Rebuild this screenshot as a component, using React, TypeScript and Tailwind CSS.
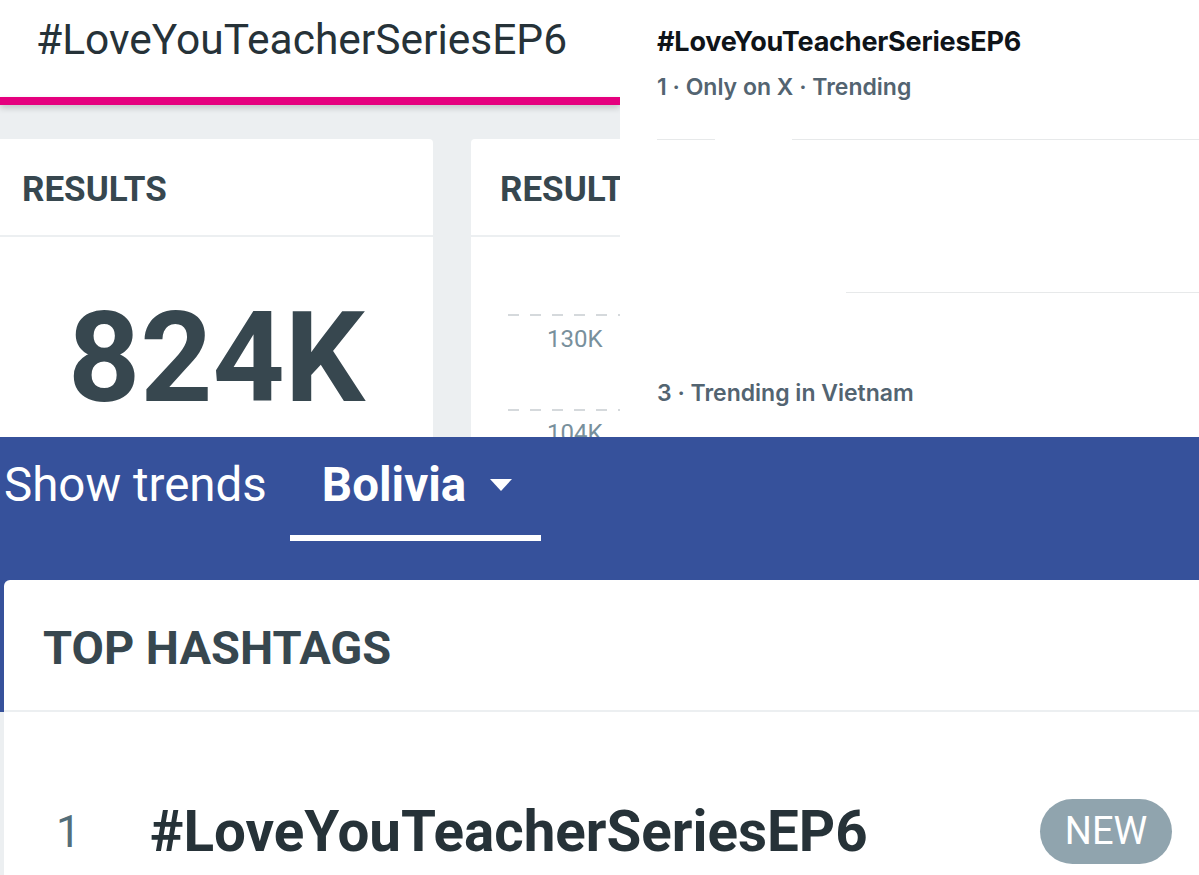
import React from 'react';

const roboto = { fontFamily: 'Roboto, "Liberation Sans", sans-serif' };
const chirp = { fontFamily: 'Inter, "Noto Sans", sans-serif' };

const DashedLine: React.FC = () => (
  <div className="h-[2px] w-full bg-[repeating-linear-gradient(to_right,#d5d9dc_0,#d5d9dc_11px,transparent_11px,transparent_22px)]" />
);

const ResultsPanel: React.FC = () => (
  <div className="flex flex-col overflow-hidden bg-[#eceff1]" style={roboto}>
    <div className="h-[97px] shrink-0 bg-white pl-[36px] pt-[16px]">
      <span className="text-[42.5px] leading-[48px] text-[#263238]">#LoveYouTeacherSeriesEP6</span>
    </div>
    <div className="relative z-10 h-[8px] shrink-0 bg-[#e5007e] shadow-[0_3px_6px_rgba(0,0,0,0.18)]" />
    <div className="flex min-h-0 flex-1 gap-[38px] overflow-hidden pt-[34px]">
      <div className="flex w-[433px] shrink-0 flex-col rounded-tr-[4px] bg-white">
        <div className="flex h-[98px] shrink-0 items-center border-b-2 border-[#eceff1] pl-[22px] pt-[6px]">
          <span className="text-[35px] font-bold text-[#37474f]">RESULTS</span>
        </div>
        <div className="flex justify-center pt-[54px]">
          <span className="text-[126px] font-bold leading-[134px] text-[#37474f]">824K</span>
        </div>
      </div>
      <div className="flex w-[200px] shrink-0 flex-col rounded-tl-[4px] bg-white">
        <div className="flex h-[98px] shrink-0 items-center border-b-2 border-[#eceff1] pl-[29px] pt-[6px]">
          <span className="text-[35px] font-bold text-[#37474f]">RESULT</span>
        </div>
        <div className="flex flex-col pl-[37px] pt-[77px]">
          <DashedLine />
          <span className="pl-[39px] pt-[9px] text-[24px] leading-[28px] text-[#78909c]">130K</span>
          <div className="pt-[56px]">
            <DashedLine />
          </div>
          <span className="pl-[39px] pt-[8px] text-[24px] leading-[28px] text-[#78909c]">104K</span>
        </div>
      </div>
    </div>
  </div>
);

const TrendPanel: React.FC = () => (
  <div className="flex flex-col overflow-hidden bg-white pl-[37px]" style={chirp}>
    <div className="pt-[25px] text-[27px] font-bold leading-[34px] tracking-[-0.2px] text-[#0f1419]">
      #LoveYouTeacherSeriesEP6
    </div>
    <div className="pt-[14px] text-[23px] font-semibold leading-[28px] text-[#536471]">
      1 · Only on X · Trending
    </div>
    <div className="mt-[38px] flex">
      <div className="h-px w-[58px] bg-[#e7e9ea]" />
      <div className="ml-[77px] h-px flex-1 bg-[#e7e9ea]" />
    </div>
    <div className="ml-[189px] mt-[152px] h-px bg-[#e7e9ea]" />
    <div className="pt-[86px] text-[23px] font-semibold leading-[28px] text-[#536471]">
      3 · Trending in Vietnam
    </div>
  </div>
);

const TrendsPanel: React.FC = () => (
  <div className="col-span-2 flex flex-col overflow-hidden bg-[#eceff1]" style={roboto}>
    <div className="flex h-[143px] shrink-0 flex-col bg-[#36519b]">
      <div className="flex items-start pt-[18px]">
        <span className="pl-[4px] text-[47.5px] leading-[60px] text-white">Show trends</span>
        <div className="ml-[23px] flex flex-col">
          <div className="flex items-center px-[32px]">
            <span className="text-[47.5px] font-bold leading-[60px] text-white">Bolivia</span>
            <svg width="22" height="13" viewBox="0 0 22 13" className="ml-[24px]">
              <path d="M0 0 L22 0 L11 12 Z" fill="#ffffff" />
            </svg>
          </div>
          <div className="mt-[20px] h-[6px] w-[251px] bg-white" />
        </div>
      </div>
    </div>
    <div className="flex flex-1 bg-[linear-gradient(to_bottom,#36519b_0,#36519b_132px,#eceff1_132px)]">
      <div className="ml-[4px] flex flex-1 flex-col rounded-tl-[6px] bg-white">
        <div className="flex h-[132px] shrink-0 items-center border-b-2 border-[#eceff1] pl-[39px] pt-[6px]">
          <span className="text-[47px] font-bold text-[#37474f]">TOP HASHTAGS</span>
        </div>
        <div className="flex items-center pt-[87px]">
          <span className="w-[146px] pl-[52px] text-[44px] leading-[52px] text-[#546e7a]">1</span>
          <span className="flex-1 text-[56.5px] font-bold leading-[64px] text-[#263238]">#LoveYouTeacherSeriesEP6</span>
          <span className="mr-[27px] flex h-[65px] w-[132px] items-center justify-center rounded-full bg-[#90a4ae] text-[38px] text-white">
            NEW
          </span>
        </div>
      </div>
    </div>
  </div>
);

const App: React.FC = () => (
  <div className="grid h-[875px] w-[1199px] grid-cols-[620px_579px] grid-rows-[437px_438px] overflow-hidden bg-white">
    <ResultsPanel />
    <TrendPanel />
    <TrendsPanel />
  </div>
);

export default App;
